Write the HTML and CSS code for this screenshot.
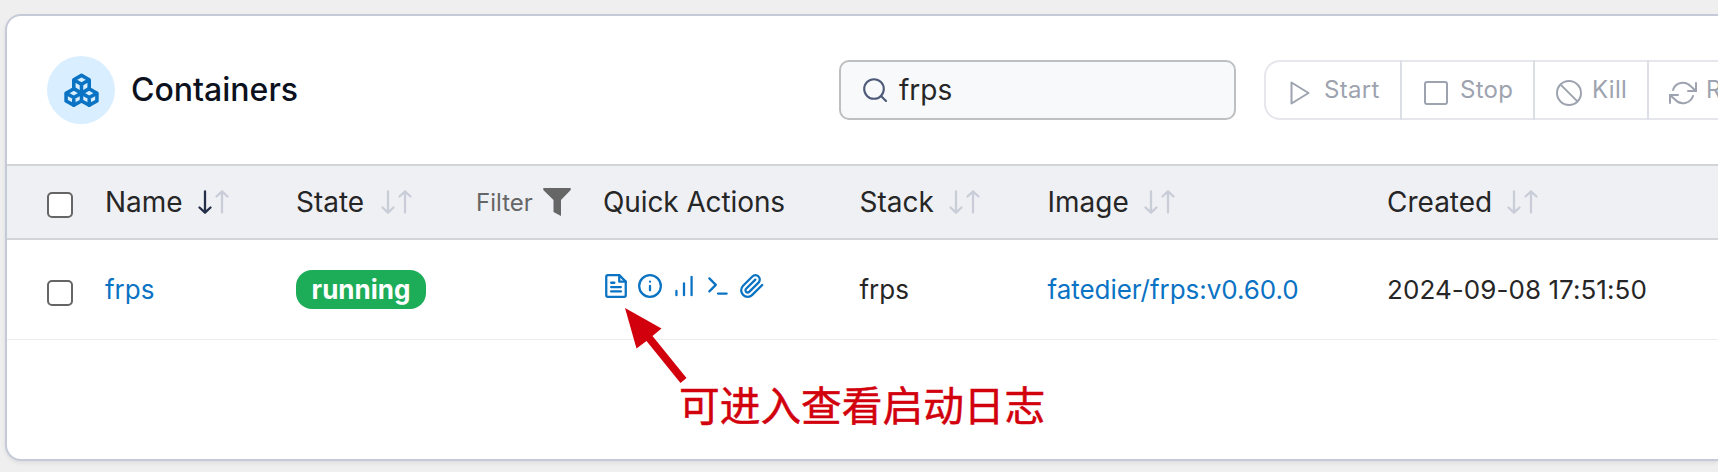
FILE: index.html
```html
<!DOCTYPE html>
<html lang="en">
<head>
<meta charset="utf-8">
<title>Containers</title>
<link rel="stylesheet" href="styles.css">
</head>
<body>
<svg class="defs" aria-hidden="true">
  <symbol id="sort-down" viewBox="0 0 14 24"><path d="M7 1.5v21M1.5 17.5 7 22.7l5.5-5.2"/></symbol>
  <symbol id="sort-up" viewBox="0 0 14 24"><path d="M7 22.5v-21M1.5 6.5 7 1.3l5.5 5.2"/></symbol>
</svg>
<main class="card">
  <header class="toolbar">
    <span class="badge-icon">
      <svg class="icon boxes" viewBox="0 0 24 24"><path d="M7 21.5 2 18.8v-5l5-3 5 2.9 5-2.9 5 3v5l-5 2.7-5-2.7Z"/><path d="m2.2 13.9 4.8 2.6 5-2.8 5 2.8 4.8-2.6M7 16.5v5M17 16.5v5M12 8v11"/><path d="M7 10.8V5l5-2.8L17 5v5.8M7.2 5.2 12 8l4.8-2.8"/></svg>
    </span>
    <h1 class="title">Containers</h1>
    <div class="search">
      <svg class="icon search-icon" viewBox="0 0 24 24"><circle cx="11" cy="11" r="9.800"/><path d="m23 23-5-5"/></svg>
      <span>frps</span>
    </div>
    <div class="actions">
      <div class="action start"><svg class="icon" viewBox="0 0 24 24"><path d="M3.500 1.500v21L20.500 12Z"/></svg><span>Start</span></div>
      <div class="action stop"><svg class="icon" viewBox="0 0 24 24"><rect x="1" y="1" width="22" height="22" rx="2"/></svg><span>Stop</span></div>
      <div class="action kill"><svg class="icon" viewBox="0 0 26 26"><circle cx="13" cy="13" r="12"/><path d="m4.600 4.600 16.800 16.800"/></svg><span>Kill</span></div>
      <div class="action restart"><svg class="icon" viewBox="0 0 28 24"><path d="M27 2v8h-8M1 22v-8h8"/><path d="M4 9a10.5 10.5 0 0 1 17.5-4L27 10M1 14l5.500 5A10.500 10.500 0 0 0 24 15"/></svg><span>R</span></div>
    </div>
  </header>

  <div class="row head">
    <span class="checkbox"></span>
    <div class="cell">Name <span class="sort"><svg class="active"><use href="#sort-down"/></svg><svg><use href="#sort-up"/></svg></span></div>
    <div class="cell">State <span class="sort sort-far"><svg><use href="#sort-down"/></svg><svg><use href="#sort-up"/></svg></span></div>
    <div class="filter">Filter <svg class="funnel" viewBox="0 0 28 28"><path d="M.6 0h26.800q1 1-.2 2.400L18 12v16l-7.500-4V12L.8 2.400Q-.4 1 .6 0Z"/></svg></div>
    <div class="cell wide">Quick Actions</div>
    <div class="cell">Stack <span class="sort"><svg><use href="#sort-down"/></svg><svg><use href="#sort-up"/></svg></span></div>
    <div class="cell">Image <span class="sort"><svg><use href="#sort-down"/></svg><svg><use href="#sort-up"/></svg></span></div>
    <div class="cell">Created <span class="sort"><svg><use href="#sort-down"/></svg><svg><use href="#sort-up"/></svg></span></div>
  </div>

  <div class="row body">
    <span class="checkbox"></span>
    <div class="cell link">frps</div>
    <div class="cell"><span class="status">running</span></div>
    <div></div>
    <div class="quick">
      <svg class="icon" viewBox="0 0 24 24"><path d="M15 2H4.500a1.500 1.500 0 0 0-1.500 1.500v17A1.500 1.500 0 0 0 4.500 22h15a1.500 1.500 0 0 0 1.500-1.500V8Z"/><path d="M15 2v6h6M16.500 13h-9M16.500 17h-9M10.500 9h-3"/></svg>
      <svg class="icon" viewBox="0 0 24 24"><circle cx="12" cy="12" r="10"/><path d="M12 16v-4M12 8h.01"/></svg>
      <svg class="icon" viewBox="0 0 24 24"><path d="M19 20.500V3.500M12 20.500V9.500M5 20.500v-4"/></svg>
      <svg class="icon" viewBox="0 0 24 24"><path d="m4 17 6-6-6-6M12 19h8"/></svg>
      <svg class="icon" viewBox="0 0 24 24"><path d="m21.440 11.050-9.190 9.190a6 6 0 0 1-8.490-8.490l8.570-8.570A4 4 0 1 1 18 8.840l-8.590 8.570a2 2 0 0 1-2.830-2.830l8.490-8.480"/></svg>
    </div>
    <div class="cell">frps</div>
    <div class="cell link image-name">fatedier/frps:v0.60.0</div>
    <div class="cell date">2024-09-08 17:51:50</div>
  </div>
</main>
<svg class="arrow" viewBox="0 0 62 76"><path d="M0 0 36.500 20.500 27.500 28 61.500 70 55.500 75 21.500 33 11.500 40.500Z"/></svg>
<p class="note">可进入查看启动日志</p>
</body>
</html>
```
FILE: styles.css
```css
* { box-sizing: border-box; }
body {
  margin: 0;
  height: 472px;
  padding: 14px 0 0 5px;
  position: relative;
  overflow: hidden;
  background: #efefef;
  color: #262626;
  font-family: Inter, "Noto Sans CJK SC", sans-serif;
  font-size: 26px;
  white-space: nowrap;
}
.defs { position: absolute; width: 0; height: 0; }
svg { display: block; flex: none; }
.card {
  height: 447px;
  border: 2px solid #c5cad8;
  border-right: 0;
  border-radius: 16px 0 0 16px;
  background: #fff;
  box-shadow: 0 2px 4px rgba(0, 0, 0, .08);
  overflow: hidden;
}
.icon {
  width: 26px;
  height: 26px;
  fill: none;
  stroke: currentColor;
  stroke-width: 2.1;
  stroke-linecap: round;
  stroke-linejoin: round;
}
.toolbar { display: flex; align-items: center; height: 148px; padding-left: 40px; }
.toolbar > * { flex: none; }
.badge-icon {
  display: grid;
  place-items: center;
  width: 68px;
  height: 68px;
  border-radius: 50%;
  background: #d9eeff;
  color: #0b73c4;
}
.boxes { width: 37px; height: 37px; stroke-width: 2.3; }
.title { width: 708px; margin: -1px 0 0 16px; font-size: 32px; font-weight: 500; color: #0c111d; }
.search {
  display: flex;
  align-items: center;
  gap: 12px;
  width: 397px;
  height: 60px;
  padding-left: 22px;
  border: 2px solid #bdbfc1;
  border-radius: 10px;
  background: #f8f9fb;
  font-size: 28px;
}
.search-icon { width: 24px; height: 24px; color: #4d5a78; }
.actions {
  display: flex;
  width: 455px;
  height: 60px;
  margin-left: 28px;
  border: 2px solid #e6e7ed;
  border-right: 0;
  border-radius: 16px 0 0 16px;
  color: #9da3af;
  font-size: 24px;
}
.action { display: flex; flex: none; align-items: center; margin: -2px 0; border-right: 2px solid #dcdfe6; }
.action:last-child { border-right: 0; }
.action span { margin-top: -2px; }
.action .icon { width: 24px; height: 24px; margin-top: 6px; stroke-width: 2; }
.start { width: 136px; padding-left: 22px; gap: 12px; letter-spacing: .3px; }
.stop { width: 133px; padding-left: 22px; gap: 12px; letter-spacing: .3px; }
.kill { width: 114px; padding-left: 21px; gap: 10px; letter-spacing: .3px; }
.action.kill .icon { width: 26px; height: 26px; }
.restart { padding-left: 20px; gap: 9px; }
.action.restart .icon { width: 28px; }
.row {
  display: grid;
  grid-template-columns: 58px 191px 180px 127px 256.500px 188px 339.500px 1fr;
  align-items: center;
  padding-left: 40px;
}
.head { height: 76px; border: solid #d2d4d6; border-width: 2px 0; background: #eff0f4; font-size: 28px; }
.body { height: 100px; border-bottom: 1px solid #ececee; }
.cell { display: flex; align-items: center; }
.wide { letter-spacing: -.1px; }
.image-name { letter-spacing: -.05px; }
.date { letter-spacing: .06px; }
.checkbox {
  width: 26px;
  height: 26px;
  margin-top: 6px;
  border: 2px solid #656565;
  border-radius: 5px;
  background: #fff;
}
.sort { display: flex; gap: 3px; margin-left: 15px; }
.sort-far { margin-left: 17px; }
.sort svg { width: 14px; height: 24px; fill: none; stroke: #c9cdd8; stroke-width: 2.3; stroke-linecap: round; stroke-linejoin: round; }
.sort .active { stroke: #242f49; }
.filter { display: flex; align-items: center; gap: 10px; font-size: 24px; color: #666; }
.funnel { width: 28px; height: 28px; fill: #666; }
.link { color: #0b73c4; }
.status {
  display: grid;
  place-items: center;
  width: 130px;
  height: 39px;
  padding-bottom: 1px;
  border-radius: 16px;
  background: #1dad59;
  color: #fff;
  font-weight: 700;
}
.quick { display: flex; gap: 8px; margin-bottom: 7px; color: #0b73c4; }
.arrow { position: absolute; left: 625px; top: 308px; width: 62px; height: 76px; fill: #d2000d; }
.note {
  position: absolute;
  left: 679px;
  top: 374px;
  margin: 0;
  color: #d2000d;
  font-family: "Noto Sans CJK SC", sans-serif;
  font-size: 40.700px;
  -webkit-text-stroke: .5px #d2000d;
  line-height: 60px;
}
```
